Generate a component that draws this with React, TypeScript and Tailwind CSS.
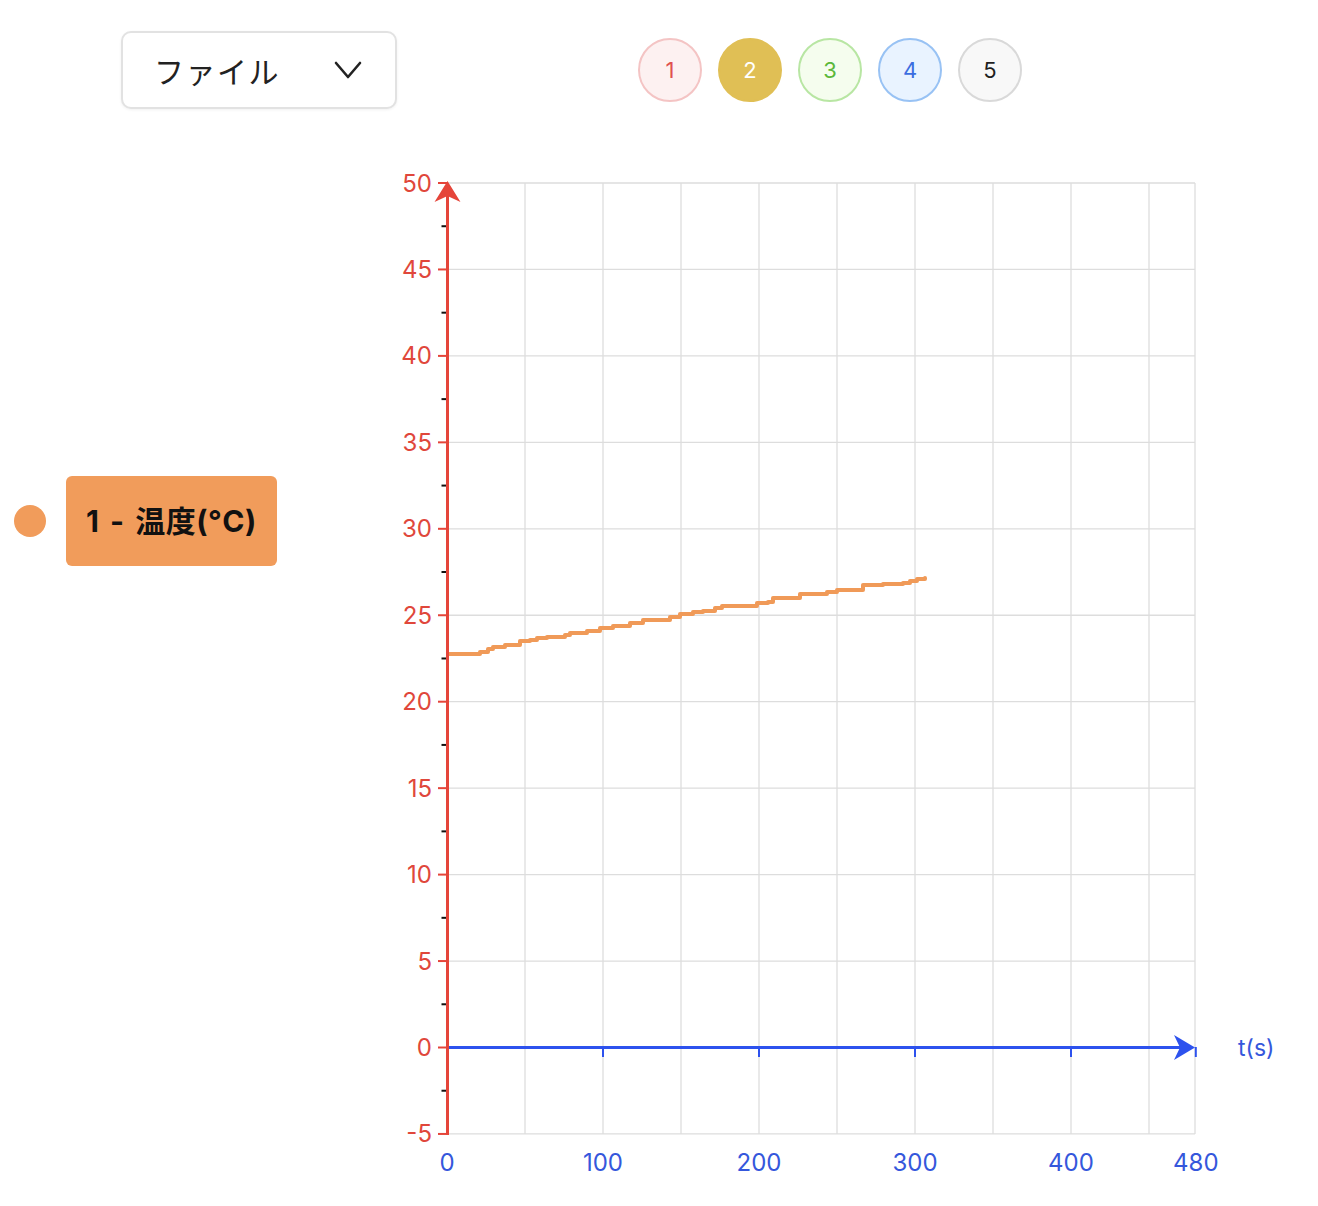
import React from "react";

const yVals = [50, 45, 40, 35, 30, 25, 20, 15, 10, 5, 0, -5];
const Y0 = 1047.5;
const PY = 17.29; // px per unit
const X0 = 447;
const PX = 1.56;
const yOf = (v: number) => Y0 - v * PY;
const xOf = (t: number) => X0 + t * PX;

const raw: [number, number][] = [
  [448, 654], [475, 654], [480, 652], [488, 649], [493, 647], [505, 645], [520, 641], [530, 640],
  [537, 638], [547, 637], [560, 637], [565, 635], [570, 633], [587, 631], [600, 628], [613, 626],
  [630, 623], [643, 620], [662, 620], [670, 617], [680, 614], [693, 612], [703, 611], [715, 608],
  [722, 606], [740, 606], [757, 603], [768, 602], [773, 598], [793, 598], [800, 594], [817, 594],
  [827, 592], [837, 590], [848, 590], [863, 585], [883, 584], [903, 583], [910, 581], [917, 579],
  [925, 578],
];

function stepPoints() {
  const pts: string[] = [];
  raw.forEach((p, i) => {
    if (i > 0) pts.push(`${p[0]},${raw[i - 1][1]}`);
    pts.push(`${p[0]},${p[1]}`);
  });
  return pts.join(" ");
}

function Chart() {
  const vGrid = [525, 603, 681, 759, 837, 915, 993, 1071, 1149, 1195];
  const xTicks: [number, string][] = [
    [0, "0"], [100, "100"], [200, "200"], [300, "300"], [400, "400"], [480, "480"],
  ];
  return (
    <svg width={920} height={1030} viewBox="380 160 920 1030" className="block">
      {/* grid */}
      {vGrid.map((x) => (
        <line key={"v" + x} x1={x} y1={183} x2={x} y2={1134} stroke="#dddddd" strokeWidth={1.3} />
      ))}
      {yVals.map((v) => (
        <line key={"h" + v} x1={447} y1={yOf(v)} x2={1195} y2={yOf(v)} stroke="#dddddd" strokeWidth={1.3} />
      ))}
      {/* minor y ticks */}
      {yVals.slice(0, -1).map((v) => (
        <line key={"m" + v} x1={441.5} y1={yOf(v - 2.5)} x2={446} y2={yOf(v - 2.5)} stroke="#111" strokeWidth={2} />
      ))}
      {/* major y ticks */}
      {yVals.map((v) => (
        <line key={"t" + v} x1={438} y1={yOf(v)} x2={447} y2={yOf(v)} stroke="#e5453a" strokeWidth={2} />
      ))}
      {/* y labels */}
      {yVals.map((v) => (
        <text
          key={"l" + v}
          x={432}
          y={yOf(v) + 8.5}
          textAnchor="end"
          fill="#e0473b"
          fontSize={24}
          fontFamily="Inter, 'Liberation Sans', sans-serif"
        >
          {v}
        </text>
      ))}
      {/* data */}
      <polyline points={stepPoints()} fill="none" stroke="#f09a58" strokeWidth={4} strokeLinejoin="round" strokeLinecap="round" />
      {/* x axis */}
      <line x1={447} y1={1047.5} x2={1185} y2={1047.5} stroke="#2d52ee" strokeWidth={3} />
      {xTicks.map(([t]) => (
        <line key={"xt" + t} x1={xOf(t)} y1={1047} x2={xOf(t)} y2={1057} stroke="#2d52ee" strokeWidth={2} />
      ))}
      <path d="M1195 1047.5 L1174 1035 L1180 1047.5 L1174 1060 Z" fill="#2d52ee" />
      {xTicks.map(([t, s]) => (
        <text
          key={"xl" + t}
          x={xOf(t)}
          y={1171}
          textAnchor="middle"
          fill="#3557dc"
          fontSize={24}
          fontFamily="Inter, 'Liberation Sans', sans-serif"
        >
          {s}
        </text>
      ))}
      <text x={1238} y={1056} fill="#3557dc" fontSize={23} fontFamily="Inter, 'Liberation Sans', sans-serif">
        t(s)
      </text>
      {/* y axis */}
      <line x1={447.5} y1={1135} x2={447.5} y2={192} stroke="#e5453a" strokeWidth={3} />
      <path d="M447.5 181 L434.5 202 L447.5 196 L460.5 202 Z" fill="#e5453a" />
    </svg>
  );
}

const circles = [
  { n: "1", cls: "bg-[#fdf1f1] border-[#f4c4c4] text-[#e0514f]" },
  { n: "2", cls: "bg-[#e0bf55] border-[#e0bf55] text-white" },
  { n: "3", cls: "bg-[#f5fdee] border-[#b8e6a3] text-[#5bb83a]" },
  { n: "4", cls: "bg-[#e9f3ff] border-[#98c2f4] text-[#3b6de0]" },
  { n: "5", cls: "bg-[#f8f8f8] border-[#d9d9d9] text-[#1f1f1f]" },
];

export default function App() {
  return (
    <div className="relative w-[1318px] h-[1206px] bg-white overflow-hidden" style={{ fontFamily: "Inter, 'Noto Sans CJK JP', sans-serif" }}>
      <div className="flex items-center pt-[31px]">
        <div className="ml-[121px] w-[276px] h-[78px] rounded-[10px] border-2 border-[#e2e2e2] bg-white shadow-[0_1px_3px_rgba(0,0,0,0.06)] flex items-center justify-between pl-[31px] pr-[33px]">
          <span className="text-[30px] text-[#222] tracking-[1.5px]" style={{ fontFamily: "'Noto Sans CJK JP', sans-serif" }}>
            ファイル
          </span>
          <svg width="28" height="20" viewBox="0 0 28 20">
            <path d="M2 3 L14 17 L26 3" fill="none" stroke="#222" strokeWidth="2.6" strokeLinecap="round" strokeLinejoin="round" />
          </svg>
        </div>
        <div className="ml-[241px] flex gap-[16px]">
          {circles.map((c) => (
            <div
              key={c.n}
              className={`w-[64px] h-[64px] rounded-full border-2 flex items-center justify-center text-[22px] ${c.cls}`}
            >
              {c.n}
            </div>
          ))}
        </div>
      </div>
      <div className="flex mt-[51px]">
        <div className="w-[380px] pt-[316px] pl-[14px]">
          <div className="flex items-center gap-[20px]">
            <div className="w-[32px] h-[32px] rounded-full bg-[#f19c5b]" />
            <div className="w-[211px] h-[90px] rounded-[6px] bg-[#f19c5b] flex items-center pl-[20px]">
              <span className="text-[30px] font-bold text-[#111] tracking-[0.5px] [word-spacing:3px] whitespace-nowrap">1 - 温度(°C)</span>
            </div>
          </div>
        </div>
        <Chart />
      </div>
    </div>
  );
}
